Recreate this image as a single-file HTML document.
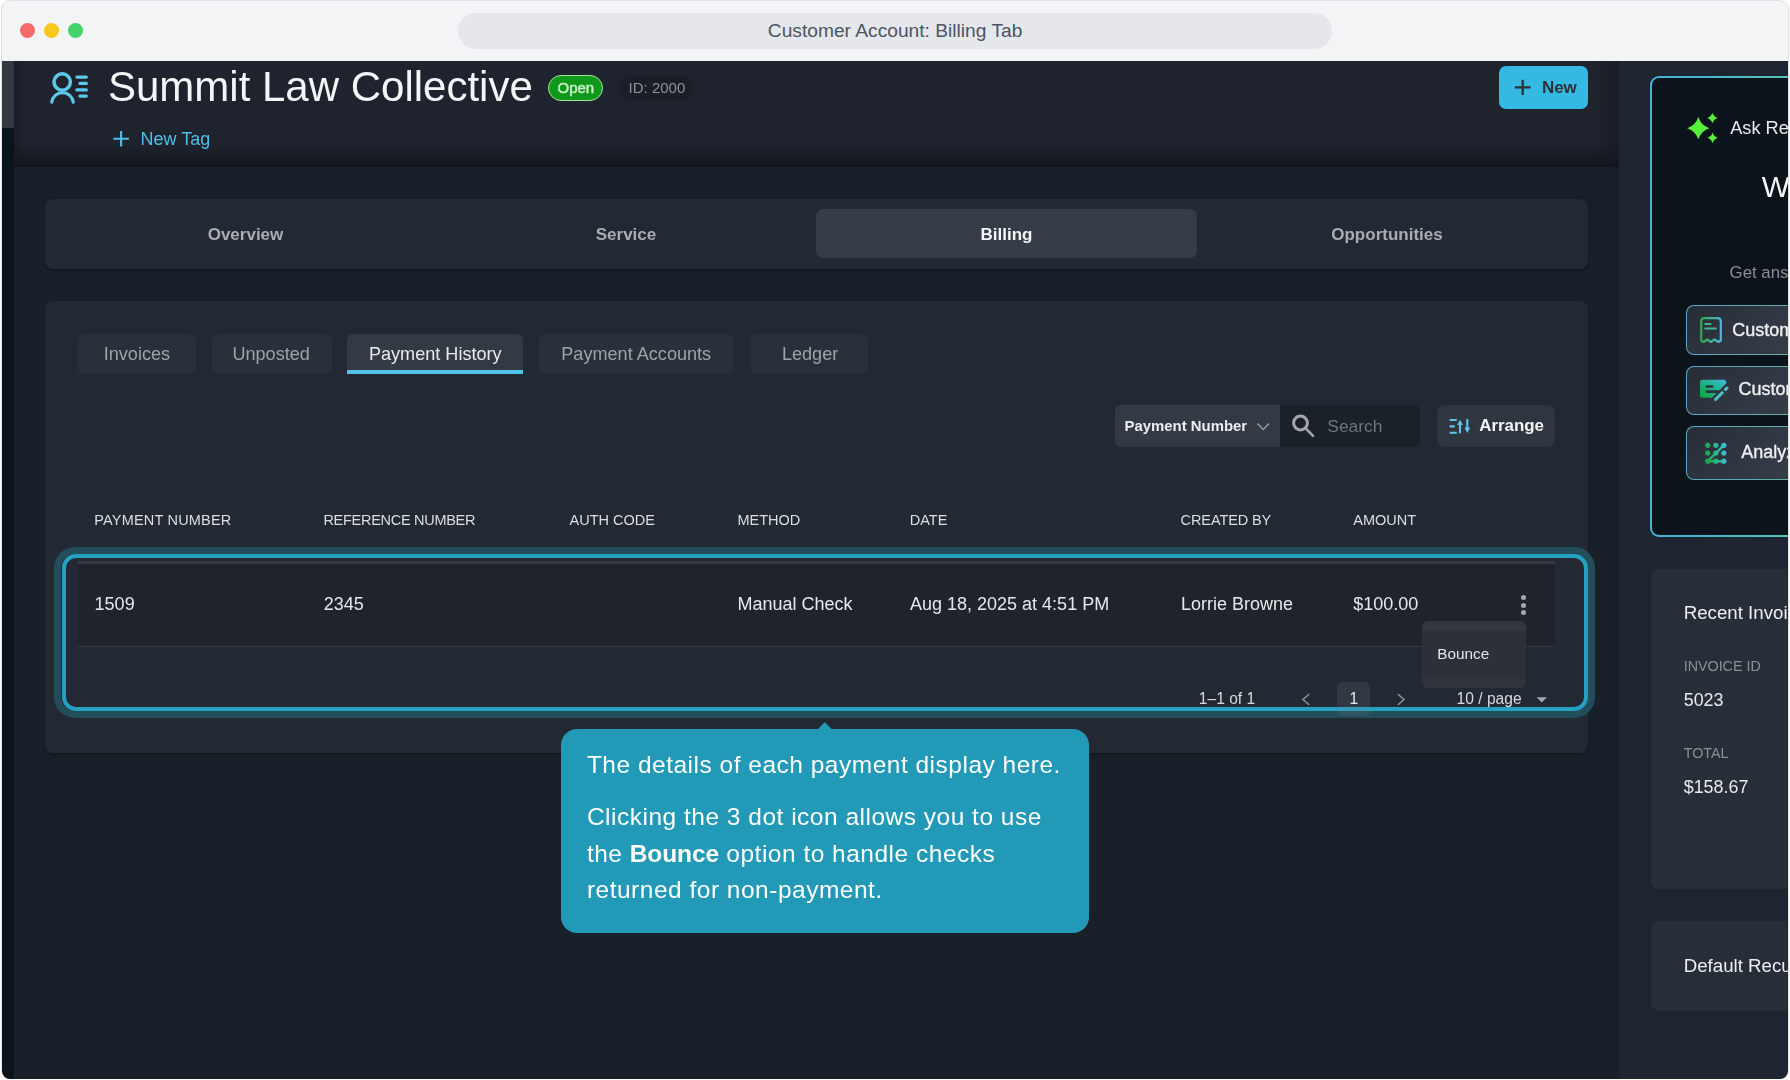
<!DOCTYPE html>
<html><head><meta charset="utf-8">
<style>
*{box-sizing:border-box;margin:0;padding:0}
html,body{width:1790px;height:1080px;overflow:hidden;background:#ffffff}
body{font-family:"Liberation Sans",sans-serif;position:relative}
.a{position:absolute}
.t{position:absolute;white-space:nowrap;line-height:1}
svg{position:absolute;overflow:visible}
#app{will-change:transform;position:absolute;left:0;top:0;width:1790px;height:1080px;clip-path:inset(61px 2px 1px 2px round 0 0 8px 8px);background:#18212a}
.tab{position:absolute;top:225.6px;font-size:17px;font-weight:700;color:#a9adb3;line-height:1;white-space:nowrap;text-align:center;width:380px}
.sub{position:absolute;top:334px;height:40px;border-radius:6px;background:#2a3039}
.subt{position:absolute;top:345.1px;font-size:18.1px;color:#9ea3a9;line-height:1;white-space:nowrap}
.hd{position:absolute;top:512.8px;font-size:14.5px;color:#dcdee1;line-height:1;white-space:nowrap}
.rw{position:absolute;top:595px;font-size:18px;color:#e6e8ea;line-height:1;white-space:nowrap}
.aib{position:absolute;left:1686px;width:130px;border-radius:8px;border:1.6px solid transparent;background:linear-gradient(135deg,#272d36 0%,#333944 60%,#3a404a 100%) padding-box,linear-gradient(90deg,#57a6c8 0px,#5ca9b4 60px,#62ad9e 102px,#62ad9e 130px) border-box}
.aibt{position:absolute;font-size:18px;color:#eef0f2;line-height:1;white-space:nowrap;-webkit-text-stroke:0.35px #eef0f2}
</style></head>
<body>
<!-- window frame -->
<div class="a" style="left:1px;top:0;width:1788px;height:1079px;border-radius:9px;background:#dfe1e4"></div>
<div class="a" style="left:2px;top:1px;width:1786px;height:61px;border-radius:8px 8px 0 0;background:#f3f4f6"></div>
<div class="a" style="left:20px;top:23px;width:15px;height:15px;border-radius:50%;background:#f76b6b"></div>
<div class="a" style="left:44px;top:23px;width:15px;height:15px;border-radius:50%;background:#f9c81e"></div>
<div class="a" style="left:68px;top:23px;width:15px;height:15px;border-radius:50%;background:#43d36a"></div>
<div class="a" style="left:458px;top:13px;width:874px;height:36px;border-radius:18px;background:#e5e7eb"></div>
<div class="t" style="left:767.8px;top:20.9px;font-size:19.2px;color:#4b5563">Customer Account: Billing Tab</div>

<div id="app">
  <!-- left strip -->
  <div class="a" style="left:2px;top:61px;width:12px;height:1020px;background:#0b131b"></div>
  <div class="a" style="left:2px;top:61px;width:12px;height:67px;background:#323942"></div>
  <!-- header -->
  <div class="a" style="left:14px;top:61px;width:1605px;height:106px;background:linear-gradient(#1e232e 0,#1e232e 82px,#171b24 96px,#10141b 106px)"></div>
  <div class="a" style="left:1590px;top:61px;width:29px;height:106px;background:linear-gradient(90deg,rgba(20,25,32,0),rgba(20,25,32,.55))"></div>
  <div class="a" style="left:14px;top:61px;width:10px;height:106px;background:linear-gradient(90deg,rgba(20,25,32,.6),rgba(20,25,32,0))"></div>

  <!-- person icon -->
  <svg style="left:0;top:0" width="1790" height="1080" viewBox="0 0 1790 1080">
    <g fill="none" stroke="#5bc8ec" stroke-linecap="round">
      <circle cx="62.2" cy="82" r="8.2" stroke-width="3.5"/>
      <path d="M51.7,102.2 A10.9,11 0 0 1 73.3,102.2" stroke-width="3.2"/>
      <path d="M76.9,77.1H86.3M80,83.4H86.3M76.9,89.9H86.3M80,96.1H86.3" stroke-width="3.3"/>
    </g>
    <!-- new tag plus -->
    <path d="M121.1,131V146.6M113.3,138.8H128.9" stroke="#4fbfe6" stroke-width="2.1" fill="none"/>
  </svg>
  <div class="t" style="left:108px;top:65.8px;font-size:42px;color:#f4f5f6">Summit Law Collective</div>
  <div class="a" style="left:548px;top:74.5px;width:55px;height:26px;border-radius:13px;background:#10981a;border:1.6px solid #a2e69e"></div>
  <div class="t" style="left:557.5px;top:80.3px;font-size:15px;color:#cdf2c8;-webkit-text-stroke:0.45px #cdf2c8">Open</div>
  <div class="a" style="left:620px;top:75.6px;width:74px;height:24px;border-radius:12px;background:#1a1f27"></div>
  <div class="t" style="left:628.6px;top:80.3px;font-size:15px;color:#8d9196">ID: 2000</div>
  <div class="t" style="left:140.5px;top:129.8px;font-size:18px;color:#4fbfe6">New Tag</div>

  <!-- New button -->
  <div class="a" style="left:1499px;top:66px;width:88.7px;height:42.5px;border-radius:7px;background:#35b9e3"></div>
  <svg style="left:0;top:0" width="1790" height="1080" viewBox="0 0 1790 1080">
    <path d="M1522.7,79.7V95M1514.9,87.4H1530.6" stroke="#2a3136" stroke-width="2.3" fill="none"/>
  </svg>
  <div class="t" style="left:1541.9px;top:78.8px;font-size:17px;font-weight:700;color:#2a3136">New</div>

  <!-- right column -->
  <div class="a" style="left:1619px;top:61px;width:171px;height:1020px;background:#1f2530"></div>
  <div class="a" style="left:1650px;top:76px;width:170px;height:460.5px;border-radius:9px;border:2.9px solid transparent;background:linear-gradient(#0b131b,#0b131b) padding-box,linear-gradient(90deg,#44b0d8 0px,#4ab7cc 70px,#58c3b0 138px,#58c3b0 170px) border-box"></div>
  <svg style="left:0;top:0" width="1790" height="1080" viewBox="0 0 1790 1080">
    <g fill="#58ee3a">
      <path d="M1698.3,117.1 Q1700.96,125.54 1709.3999999999999,128.2 Q1700.96,130.86 1698.3,139.29999999999998 Q1695.64,130.86 1687.2,128.2 Q1695.64,125.54 1698.3,117.1Z"/>
      <path d="M1712.4,112.7 Q1713.67,116.73 1717.7,118 Q1713.67,119.27 1712.4,123.3 Q1711.13,119.27 1707.1000000000001,118 Q1711.13,116.73 1712.4,112.7Z"/>
      <path d="M1712.6,132.4 Q1713.90,136.50 1718.0,137.8 Q1713.90,139.10 1712.6,143.20000000000002 Q1711.30,139.10 1707.1999999999998,137.8 Q1711.30,136.50 1712.6,132.4Z"/>
    </g>
  </svg>
  <div class="t" style="left:1730.2px;top:118.9px;font-size:18.2px;color:#e8eaec">Ask Rev</div>
  <div class="t" style="left:1761.7px;top:172.1px;font-size:29.7px;color:#f4f5f6">W</div>
  <div class="t" style="left:1729.6px;top:264.5px;font-size:16.8px;color:#8a8f95">Get answers</div>

  <div class="aib" style="top:305px;height:50px"></div>
  <div class="aib" style="top:365.5px;height:49.5px"></div>
  <div class="aib" style="top:426px;height:54px"></div>
  <svg style="left:0;top:0" width="1790" height="1080" viewBox="0 0 1790 1080">
    <defs>
      <linearGradient id="g1" x1="0" y1="0" x2="1" y2="0"><stop offset="0" stop-color="#2aa94f"/><stop offset="1" stop-color="#50b6d6"/></linearGradient>
      <linearGradient id="g2" x1="0" y1="1" x2="1" y2="0"><stop offset="0" stop-color="#10a53a"/><stop offset="0.5" stop-color="#1eb08a"/><stop offset="1" stop-color="#3fbde0"/></linearGradient>
      <linearGradient id="g3" gradientUnits="userSpaceOnUse" x1="1705" y1="455" x2="1726.5" y2="452"><stop offset="0" stop-color="#12a63c"/><stop offset="0.5" stop-color="#2cb48a"/><stop offset="1" stop-color="#45bce0"/></linearGradient>
    </defs>
    <g fill="none" stroke-width="2.2" stroke-linejoin="round" stroke-linecap="round">
      <path stroke="url(#g1)" d="M1701.2,340.5V321.5Q1701.2,318.2 1704.5,318.2H1717.5Q1720.8,318.2 1720.8,321.5V340.5L1718.5,342L1714.5,339.5L1710.8,342L1707.3,339.5L1703.5,342Z"/>
      <path stroke="#46b38c" d="M1705.3,324H1710.5M1705.3,328.5H1715.8"/>
    </g>
    <path d="M1700,382Q1700,379.8 1702.2,379.8H1724Q1726.2,379.8 1726.2,382V383.5L1712,397.8H1702.2Q1700,397.8 1700,395.6Z" fill="url(#g2)"/>
    <path d="M1706.8,386.5H1712.2M1706.8,391.6H1720" stroke="#2c323b" stroke-width="2.6" stroke-linecap="round"/>
    <path d="M1715.6,399.4L1723.1,391.9M1724.5,390.5L1727,388" stroke="#4cbcc8" stroke-width="3.1"/><circle cx="1715.6" cy="399.4" r="1.55" fill="#4cbcc8"/><circle cx="1727" cy="388" r="1.55" fill="#4cbcc8"/>
    <g fill="url(#g3)">
      <circle cx="1707.7" cy="445.3" r="2.6"/><circle cx="1715.8" cy="445.3" r="2.6"/><circle cx="1723.8" cy="445.3" r="2.6"/>
      <circle cx="1707.7" cy="453.1" r="2.6"/><circle cx="1715.8" cy="453.1" r="2.6"/><circle cx="1723.8" cy="453.1" r="2.6"/>
      <circle cx="1707.7" cy="461.2" r="2.6"/><circle cx="1715.8" cy="461.2" r="2.6"/><circle cx="1723.8" cy="461.2" r="2.6"/>
    </g>
    <path d="M1707.7,461.2L1723.8,445.3M1707.7,461.2H1723.8" stroke="url(#g3)" stroke-width="2.5" fill="none"/>
  </svg>
  <div class="aibt" style="left:1732.2px;top:321.1px">Customer</div>
  <div class="aibt" style="left:1738.5px;top:380.4px">Customer</div>
  <div class="aibt" style="left:1741.3px;top:443.3px">Analyze</div>

  <div class="a" style="left:1650.5px;top:569px;width:160px;height:319.5px;border-radius:8px;background:#282e38"></div>
  <div class="t" style="left:1683.7px;top:603.6px;font-size:18.7px;color:#eceef0">Recent Invoices</div>
  <div class="t" style="left:1683.7px;top:659px;font-size:14.3px;color:#8b9096">INVOICE ID</div>
  <div class="t" style="left:1683.7px;top:691.5px;font-size:17.9px;color:#e8eaec">5023</div>
  <div class="t" style="left:1683.7px;top:746.2px;font-size:14.3px;color:#8b9096">TOTAL</div>
  <div class="t" style="left:1683.7px;top:778.8px;font-size:17.9px;color:#e8eaec">$158.67</div>
  <div class="a" style="left:1650.5px;top:921px;width:160px;height:90px;border-radius:8px;background:#282e38"></div>
  <div class="t" style="left:1683.7px;top:956.7px;font-size:18.7px;color:#eceef0">Default Recurring</div>

  <!-- main tabs -->
  <div class="a" style="left:45px;top:199px;width:1542.5px;height:69.5px;border-radius:8px;background:#232932;box-shadow:0 1.5px 3px rgba(14,16,22,.55)"></div>
  <div class="a" style="left:816px;top:209.4px;width:381px;height:49px;border-radius:7px;background:#353c46"></div>
  <div class="tab" style="left:55.5px">Overview</div>
  <div class="tab" style="left:436px">Service</div>
  <div class="tab" style="left:816.5px;color:#f4f5f6">Billing</div>
  <div class="tab" style="left:1197px">Opportunities</div>

  <!-- content card -->
  <div class="a" style="left:45px;top:301px;width:1542.5px;height:452px;border-radius:8px;background:#232932;box-shadow:0 1.5px 3px rgba(14,16,22,.55)"></div>
  <div class="sub" style="left:78px;width:118px"></div>
  <div class="subt" style="left:103.7px">Invoices</div>
  <div class="sub" style="left:211.8px;width:120.2px"></div>
  <div class="subt" style="left:232.4px">Unposted</div>
  <div class="sub" style="left:347px;width:176.2px;background:#333a44;border-radius:6px 6px 0 0"></div>
  <div class="a" style="left:347px;top:370px;width:176.2px;height:4px;background:#4fc3ec"></div>
  <div class="subt" style="left:368.9px;color:#e8eaec">Payment History</div>
  <div class="sub" style="left:539.4px;width:195px"></div>
  <div class="subt" style="left:561.3px">Payment Accounts</div>
  <div class="sub" style="left:750.6px;width:117.7px"></div>
  <div class="subt" style="left:781.9px">Ledger</div>

  <!-- toolbar -->
  <div class="a" style="left:1114.5px;top:405.3px;width:166px;height:41.7px;border-radius:6px 0 0 6px;background:#333a44"></div>
  <div class="t" style="left:1124.6px;top:419px;font-size:14.9px;font-weight:700;color:#eceef0">Payment Number</div>
  <div class="a" style="left:1280px;top:405.3px;width:140.3px;height:41.3px;border-radius:0 6px 6px 0;background:#1b2129"></div>
  <div class="t" style="left:1327.3px;top:417.5px;font-size:17.4px;color:#6f757c">Search</div>
  <div class="a" style="left:1436.8px;top:405.3px;width:118px;height:41.3px;border-radius:8px;background:#2f363f"></div>
  <div class="t" style="left:1479.2px;top:417.6px;font-size:16.9px;font-weight:700;color:#f4f5f6">Arrange</div>
  <svg style="left:0;top:0" width="1790" height="1080" viewBox="0 0 1790 1080">
    <path d="M1257.5,423.5L1263.2,429.5L1269,423.5" stroke="#9a9ea3" stroke-width="1.4" fill="none"/>
    <circle cx="1300.5" cy="423" r="6.9" stroke="#a3a7ac" stroke-width="3" fill="none"/>
    <path d="M1306,428.6L1313,435.8" stroke="#a3a7ac" stroke-width="2.6" stroke-linecap="round"/>
    <g stroke="#5cc6ea" stroke-width="2.1" fill="none">
      <path d="M1449.6,420H1456.8M1449.6,426.4H1454.8M1449.6,432.7H1456.8"/>
      <path d="M1460,433.3V423M1467.3,419V429"/>
    </g>
    <g fill="#5cc6ea">
      <path d="M1460,419.8L1462.9,424.9H1457.1Z"/>
      <path d="M1467.3,433L1464.4,427.6H1470.2Z"/>
    </g>
  </svg>

  <!-- table headers -->
  <div class="hd" style="left:94.2px;letter-spacing:0.2px">PAYMENT NUMBER</div>
  <div class="hd" style="left:323.4px;letter-spacing:-0.28px">REFERENCE NUMBER</div>
  <div class="hd" style="left:569.6px">AUTH CODE</div>
  <div class="hd" style="left:737.4px">METHOD</div>
  <div class="hd" style="left:909.8px">DATE</div>
  <div class="hd" style="left:1180.6px;letter-spacing:-0.1px">CREATED BY</div>
  <div class="hd" style="left:1353.3px">AMOUNT</div>

  <!-- row -->
  <div class="a" style="left:78px;top:561.5px;width:1477px;height:85px;background:#1e232c"></div>
  <div class="a" style="left:78px;top:561.3px;width:1477px;height:2.6px;background:#353a44"></div>
  <div class="a" style="left:78px;top:645.5px;width:1477px;height:1.8px;background:#323842"></div>
  <div class="rw" style="left:94.6px">1509</div>
  <div class="rw" style="left:323.8px">2345</div>
  <div class="rw" style="left:737.4px">Manual Check</div>
  <div class="rw" style="left:910px">Aug 18, 2025 at 4:51 PM</div>
  <div class="rw" style="left:1180.9px">Lorrie Browne</div>
  <div class="rw" style="left:1353.3px">$100.00</div>
  <div class="a" style="left:1520.9px;top:594.6px;width:5px;height:5px;border-radius:50%;background:#a5a9ae"></div>
  <div class="a" style="left:1520.9px;top:602.5px;width:5px;height:5px;border-radius:50%;background:#a5a9ae"></div>
  <div class="a" style="left:1520.9px;top:610.4px;width:5px;height:5px;border-radius:50%;background:#a5a9ae"></div>

  <!-- pagination -->
  <div class="t" style="left:1198.8px;top:691.4px;font-size:15.6px;color:#d8dadd">1–1 of 1</div>
  <div class="t" style="left:1456.6px;top:691.4px;font-size:15.6px;color:#d8dadd">10 / page</div>
  <svg style="left:0;top:0" width="1790" height="1080" viewBox="0 0 1790 1080">
    <path d="M1309.3,694L1303,699.5L1309.3,705M1397.8,694L1404,699.5L1397.8,705" stroke="#8d9196" stroke-width="1.5" fill="none"/>
    <path d="M1536.7,697.3H1546.9L1541.8,702.5Z" fill="#a8abb0"/>
  </svg>

  <!-- highlight -->
  <div class="a" style="left:54px;top:547px;width:1541px;height:171px;border-radius:21px;border:7.5px solid #224e5c"></div>
  <div class="a" style="left:61.7px;top:554.4px;width:1526.7px;height:156.2px;border-radius:14px;border:4.2px solid #25a0c1"></div>

  <div class="a" style="left:1336.6px;top:682px;width:33.5px;height:34.3px;border-radius:5px;background:rgba(120,130,145,0.17)"></div>
  <div class="t" style="left:1349.5px;top:691.4px;font-size:15.6px;color:#e6e8ea">1</div>

  <!-- dropdown -->
  <div class="a" style="left:1421.6px;top:620.9px;width:104.4px;height:66.8px;border-radius:6px;background:linear-gradient(#31363f 0,#31363f 9.6px,#2b3039 9.6px,#2b3039 56.5px,#2e333c 56.5px)"></div>
  <div class="t" style="left:1437.3px;top:645.6px;font-size:15.3px;color:#e4e6e8">Bounce</div>

  <!-- tooltip -->
  <svg style="left:0;top:0" width="1790" height="1080" viewBox="0 0 1790 1080">
    <path d="M817.5,729.5L824.8,722L832,729.5Z" fill="#2399b8"/>
  </svg>
  <div class="a" style="left:561px;top:729px;width:528px;height:203.6px;border-radius:16px;background:#2399b8"></div>
  <div class="t" style="left:586.9px;top:752.6px;font-size:24.5px;color:#ffffff;letter-spacing:0.5px">The details of each payment display here.</div>
  <div class="t" style="left:586.9px;top:805.4px;font-size:24.5px;color:#ffffff;letter-spacing:0.5px">Clicking the 3 dot icon allows you to use</div>
  <div class="t" style="left:586.9px;top:841.5px;font-size:24.5px;color:#ffffff;letter-spacing:0.5px">the <b style="letter-spacing:-0.1px">Bounce</b> option to handle checks</div>
  <div class="t" style="left:586.9px;top:877.6px;font-size:24.5px;color:#ffffff;letter-spacing:0.5px">returned for non-payment.</div>
</div>
</body></html>
